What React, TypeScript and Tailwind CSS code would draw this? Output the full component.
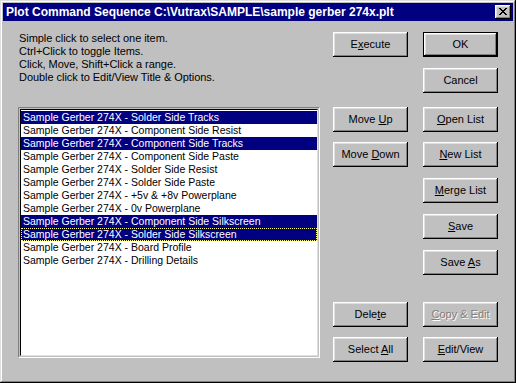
import React from "react";

const items = [
  { t: "Sample Gerber 274X - Solder Side Tracks", sel: true },
  { t: "Sample Gerber 274X - Component Side Resist" },
  { t: "Sample Gerber 274X - Component Side Tracks", sel: true },
  { t: "Sample Gerber 274X - Component Side Paste" },
  { t: "Sample Gerber 274X - Solder Side Resist" },
  { t: "Sample Gerber 274X - Solder Side Paste" },
  { t: "Sample Gerber 274X - +5v & +8v Powerplane" },
  { t: "Sample Gerber 274X - 0v Powerplane" },
  { t: "Sample Gerber 274X - Component Side Silkscreen", sel: true },
  { t: "Sample Gerber 274X - Solder Side Silkscreen", sel: true, focus: true },
  { t: "Sample Gerber 274X - Board Profile" },
  { t: "Sample Gerber 274X - Drilling Details" },
];

const raised =
  "shadow-[inset_-1px_-1px_0_#000,inset_1px_1px_0_#fff,inset_-2px_-2px_0_#808080,inset_2px_2px_0_#dfdfdf]";

function Btn({
  children,
  def,
  disabled,
}: {
  children: React.ReactNode;
  def?: boolean;
  disabled?: boolean;
}) {
  return (
    <div className={`w-[75px] h-[25px] ${def ? "border border-black" : ""}`}>
      <div
        className={`h-full w-full bg-[#c0c0c0] ${raised} flex items-center justify-center ${
          disabled ? "text-[#808080] [text-shadow:1px_1px_0_#fff]" : "text-black"
        }`}
      >
        <span className="whitespace-pre">{children}</span>
      </div>
    </div>
  );
}

function U({ children }: { children: React.ReactNode }) {
  return <span className="underline underline-offset-[1px]">{children}</span>;
}

export default function App() {
  return (
    <div
      className="w-[516px] h-[383px] bg-[#c0c0c0] p-[3px] flex flex-col shadow-[inset_-1px_-1px_0_#000,inset_1px_1px_0_#dfdfdf,inset_-2px_-2px_0_#808080,inset_2px_2px_0_#fff] text-[11px] leading-[13px] text-black"
      style={{ fontFamily: '"Liberation Sans", Arial, sans-serif' }}
    >
      {/* Title bar */}
      <div className="h-[18px] bg-[#000080] flex items-center pl-[3px] pr-[2px]">
        <div className="flex-1 text-white font-bold text-[12px] whitespace-nowrap">
          Plot Command Sequence C:\Vutrax\SAMPLE\sample gerber 274x.plt
        </div>
        <div className={`w-[16px] h-[14px] bg-[#c0c0c0] ${raised} flex items-center justify-center`}>
          <svg width="8" height="7" viewBox="0 0 8 7" className="mb-[1px]">
            <path d="M0 0h2v1h-2z M6 0h2v1h-2z M1 1h2v1h-2z M5 1h2v1h-2z M2 2h4v1h-4z M3 3h2v1h-2z M2 4h4v1h-4z M1 5h2v1h-2z M5 5h2v1h-2z M0 6h2v1h-2z M6 6h2v1h-2z" fill="#000" />
          </svg>
        </div>
      </div>

      {/* Body */}
      <div className="flex-1 flex pl-[15px]">
        {/* Left column */}
        <div className="w-[302px] flex flex-col">
          <div className="pt-[11px] pl-[1px] whitespace-nowrap tracking-[-0.05px]">
            <div>Simple click to select one item.</div>
            <div>Ctrl+Click to toggle Items.</div>
            <div>Click, Move, Shift+Click a range.</div>
            <div>Double click to Edit/View Title &amp; Options.</div>
          </div>
          <div className="mt-[23px] h-[251px] p-[1px] border border-t-[#808080] border-l-[#808080] border-r-white border-b-white">
            <div className="h-full bg-white border border-t-black border-l-black border-r-[#dfdfdf] border-b-[#dfdfdf] pt-[1px] text-[10.5px]">
              {items.map((it, i) => (
                <div
                  key={i}
                  className={`h-[13px] pl-[2px] whitespace-pre ${
                    it.sel ? "bg-[#000080] text-white" : ""
                  } ${it.focus ? "outline-1 outline-dotted outline-[#ffff80] -outline-offset-1" : ""}`}
                >
                  {it.t}
                </div>
              ))}
            </div>
          </div>
        </div>

        {/* Right buttons */}
        <div className="ml-[13px] pt-[11px] flex flex-col">
          <div className="flex gap-[15px]">
            <Btn>
              E<U>x</U>ecute
            </Btn>
            <Btn def>OK</Btn>
          </div>
          <div className="flex mt-[11px] pl-[90px]">
            <Btn>Cancel</Btn>
          </div>
          <div className="flex gap-[15px] mt-[14px]">
            <Btn>
              {"Move "}
              <U>U</U>p
            </Btn>
            <Btn>
              <U>O</U>pen List
            </Btn>
          </div>
          <div className="flex gap-[15px] mt-[10px]">
            <Btn>
              {"Move "}
              <U>D</U>own
            </Btn>
            <Btn>
              <U>N</U>ew List
            </Btn>
          </div>
          <div className="flex mt-[11px] pl-[90px]">
            <Btn>
              <U>M</U>erge List
            </Btn>
          </div>
          <div className="flex mt-[11px] pl-[90px]">
            <Btn>
              <U>S</U>ave
            </Btn>
          </div>
          <div className="flex mt-[11px] pl-[90px]">
            <Btn>
              {"Save "}
              <U>A</U>s
            </Btn>
          </div>
          <div className="flex gap-[15px] mt-[27px]">
            <Btn>
              Dele<U>t</U>e
            </Btn>
            <Btn disabled>
              <span className="underline">C</span>opy &amp; Edit
            </Btn>
          </div>
          <div className="flex gap-[15px] mt-[10px]">
            <Btn>
              {"Select "}
              <U>A</U>ll
            </Btn>
            <Btn>
              <U>E</U>dit/View
            </Btn>
          </div>
        </div>
      </div>
    </div>
  );
}
